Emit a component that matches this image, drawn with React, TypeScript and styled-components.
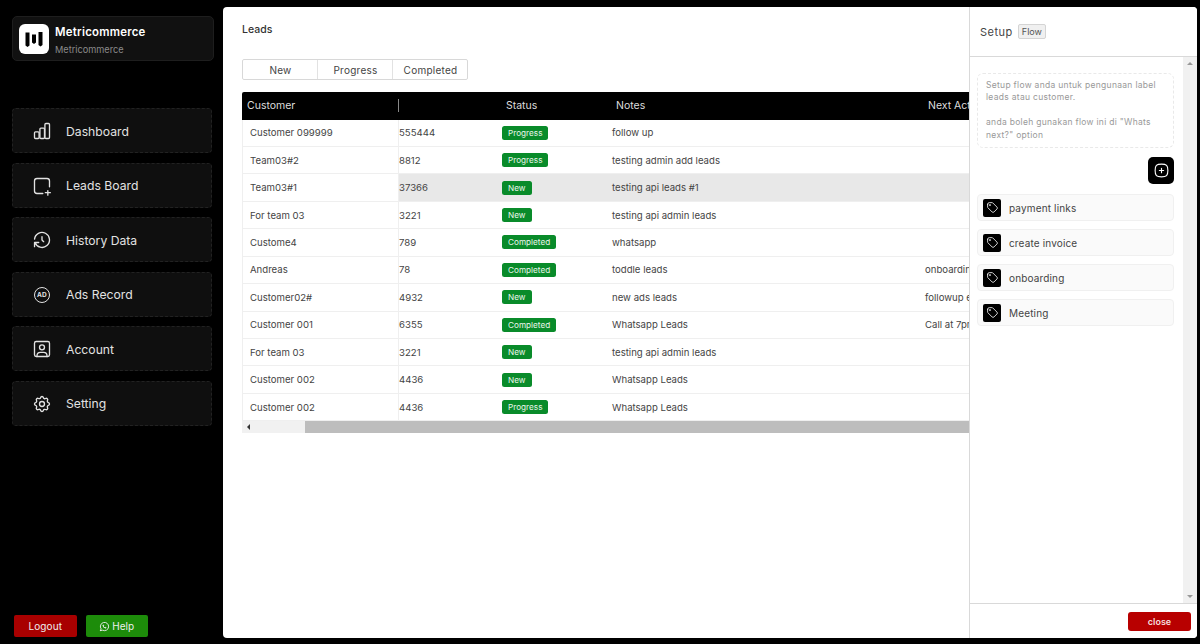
import { useState } from 'react';
import styled, { createGlobalStyle } from 'styled-components';
import {
  TbHistory,
  TbUserSquare,
  TbSettings,
  TbTag,
  TbSquareRoundedPlus,
  TbBrandWhatsapp,
} from 'react-icons/tb';

const GlobalStyle = createGlobalStyle`
  html, body {
    margin: 0;
    height: 100%;
    background: #000;
    font-family: 'Inter', 'Liberation Sans', sans-serif;
  }
  #root { height: 100%; }
  * { box-sizing: border-box; }
`;

const Page = styled.div`
  height: 644px;
  width: 1200px;
  display: flex;
  overflow: hidden;
  background: #000;
`;

const Sidebar = styled.aside`
  width: 223px;
  flex-shrink: 0;
  display: flex;
  flex-direction: column;
  padding: 16px 11px 7px 12px;
`;

const Brand = styled.div`
  height: 45px;
  display: flex;
  align-items: center;
  gap: 6px;
  padding-left: 6px;
  margin-right: -2px;
  background: #111;
  border: 1px solid #1e1e1e;
  border-radius: 5px;
`;

const LogoBox = styled.div`
  width: 30px;
  height: 30px;
  border-radius: 6px;
  background: #fff;
  display: flex;
  align-items: center;
  justify-content: center;
`;

const BrandText = styled.div`
  display: flex;
  flex-direction: column;
  gap: 5px;
  padding-top: 3px;
`;

const BrandName = styled.div`
  font-size: 11.4px;
  font-weight: 600;
  line-height: 14px;
  letter-spacing: 0.25px;
  color: #fff;
`;

const BrandSub = styled.div`
  font-size: 9.2px;
  line-height: 12px;
  color: #8a8a8a;
`;

const Menu = styled.nav`
  margin-top: 47px;
  display: flex;
  flex-direction: column;
  gap: 9.5px;
`;

const MenuItem = styled.a`
  height: 45px;
  display: flex;
  align-items: center;
  gap: 14px;
  padding: 1px 0 0 19px;
  background: #0f0f0f;
  border: 1px dashed #222;
  border-radius: 4px;
  color: #e2e2e2;
  font-size: 12.2px;
  svg {
    width: 20px;
    height: 20px;
    flex-shrink: 0;
    stroke-width: 1.6;
  }
`;

const AdsIcon = styled.span`
  width: 16px;
  height: 16px;
  margin: 0 2px;
  flex-shrink: 0;
  border: 1.3px solid #e2e2e2;
  border-radius: 50%;
  display: flex;
  align-items: center;
  justify-content: center;
  font-size: 6.5px;
  font-weight: 700;
  letter-spacing: 0.2px;
`;

const SidebarFooter = styled.div`
  margin-top: auto;
  padding-left: 2px;
  display: flex;
  gap: 9px;
`;

const FootButton = styled.button<{ $bg: string }>`
  width: 62.5px;
  height: 22px;
  padding: 0;
  border: 0;
  border-radius: 2px;
  background: ${(p) => p.$bg};
  color: #eee;
  font-family: inherit;
  font-size: 10px;
  letter-spacing: 0.1px;
  display: flex;
  align-items: center;
  justify-content: center;
  gap: 2px;
  svg {
    width: 11px;
    height: 11px;
  }
`;

const Main = styled.main`
  position: relative;
  width: 974px;
  height: 631px;
  margin-top: 7px;
  background: #fff;
  border-radius: 4px;
  overflow: hidden;
`;

const Content = styled.div`
  padding: 16px 0 0 19px;
`;

const Title = styled.h1`
  margin: 0;
  font-size: 10.5px;
  line-height: 13px;
  font-weight: 500;
  color: #333;
`;

const Tabs = styled.div`
  margin-top: 23px;
  width: 226px;
  height: 21px;
  display: flex;
  border: 1px solid #d8d8d8;
  border-radius: 2px;
`;

const Tab = styled.div`
  flex: 1;
  display: flex;
  align-items: center;
  justify-content: center;
  padding-left: 1px;
  font-size: 10px;
  letter-spacing: 0.25px;
  color: #444;
  & + & {
    border-left: 1px solid #e2e2e2;
  }
`;

const Table = styled.div`
  margin-top: 12px;
  width: 940px;
`;

const HeadRow = styled.div`
  display: flex;
  height: 27.5px;
  background: #000;
  border-radius: 2px 0 0 0;
  color: #ddd;
  font-size: 10.5px;
  align-items: center;
`;

const HeadCell = styled.div<{ $w: number; $divider?: boolean }>`
  width: ${(p) => p.$w}px;
  flex-shrink: 0;
  padding-left: 5px;
  line-height: 13px;
  white-space: nowrap;
  border-right: ${(p) => (p.$divider ? '1px solid #888' : '0')};
`;

const Row = styled.div<{ $active?: boolean }>`
  display: flex;
  align-items: center;
  height: 27.45px;
  border-bottom: 1px solid #efefef;
  background: ${(p) => (p.$active ? '#e8e8e8' : '#fff')};
  font-size: 9.6px;
  color: #444;
`;

const Cell = styled.div<{ $w: number }>`
  width: ${(p) => p.$w}px;
  flex-shrink: 0;
  white-space: nowrap;
`;

const CustomerCell = styled(Cell)`
  height: 100%;
  display: flex;
  align-items: center;
  padding-left: 7px;
  background: #fff;
  border-left: 1px solid #efefef;
  border-right: 1px solid #efefef;
`;

const Badge = styled.span`
  display: inline-block;
  height: 14px;
  line-height: 14px;
  padding: 0 6px;
  border-radius: 2.5px;
  background: #098b2a;
  color: #e9f6ec;
  font-size: 8.2px;
`;

const Scrollbar = styled.div`
  display: flex;
  align-items: center;
  height: 11.5px;
  width: 940px;
  background: #f1f1f1;
`;

const ScrollArrowLeft = styled.span`
  margin-left: 5px;
  width: 0;
  height: 0;
  border-top: 3px solid transparent;
  border-bottom: 3px solid transparent;
  border-right: 3px solid #333;
`;

const ScrollThumb = styled.div`
  margin-left: 55px;
  flex: 1;
  height: 100%;
  background: #bdbdbd;
`;

const Drawer = styled.section`
  position: absolute;
  top: 0;
  right: 0;
  bottom: 0;
  width: 228px;
  display: flex;
  flex-direction: column;
  background: #fff;
  border-left: 1px solid #d9d9d9;
`;

const DrawerHead = styled.header`
  height: 50px;
  flex-shrink: 0;
  display: flex;
  align-items: center;
  gap: 5px;
  padding-left: 10px;
  border-bottom: 1px solid #d9d9d9;
  font-size: 11px;
  letter-spacing: 0.5px;
  color: #444;
`;

const FlowTag = styled.span`
  font-size: 9px;
  letter-spacing: 0;
  line-height: 13px;
  padding: 0 3px;
  background: #f0f0f0;
  border: 1px solid #d4d4d4;
  border-radius: 2px;
  color: #555;
`;

const DrawerBody = styled.div`
  flex: 1;
  display: flex;
  min-height: 0;
`;

const DrawerInner = styled.div`
  flex: 1;
  padding: 16px 9px 0 7px;
  display: flex;
  flex-direction: column;
`;

const NoteBox = styled.div`
  height: 75px;
  padding: 5px 8px;
  border: 1px dashed #e9e9e9;
  border-radius: 6px;
  font-size: 8.5px;
  line-height: 12.4px;
  letter-spacing: 0.3px;
  color: #999;
`;

const AddButton = styled.button`
  align-self: flex-end;
  margin-top: 9px;
  width: 26px;
  height: 27px;
  padding: 0;
  border: 0;
  border-radius: 5px;
  background: #000;
  color: #fff;
  display: flex;
  align-items: center;
  justify-content: center;
  svg {
    width: 17px;
    height: 17px;
    stroke-width: 1.6;
  }
`;

const FlowList = styled.div`
  margin-top: 10px;
  display: flex;
  flex-direction: column;
  gap: 8px;
`;

const FlowItem = styled.div`
  height: 27px;
  display: flex;
  align-items: center;
  gap: 8px;
  padding-left: 5px;
  background: #fafafa;
  border: 1px solid #f0f0f0;
  border-radius: 4px;
  font-size: 10px;
  letter-spacing: 0.15px;
  color: #444;
`;

const TagIcon = styled.span`
  width: 18px;
  height: 18px;
  border-radius: 2px;
  background: #000;
  color: #eee;
  display: flex;
  align-items: center;
  justify-content: center;
  svg {
    width: 13px;
    height: 13px;
    stroke-width: 1.6;
  }
`;

const DrawerScroll = styled.div`
  width: 14px;
  flex-shrink: 0;
  background: #f1f1f1;
  display: flex;
  flex-direction: column;
  justify-content: space-between;
  align-items: center;
  padding: 5px 0;
`;

const ArrowUp = styled.span`
  width: 0;
  height: 0;
  border-left: 3px solid transparent;
  border-right: 3px solid transparent;
  border-bottom: 3px solid #999;
`;

const ArrowDown = styled(ArrowUp)`
  border-bottom: 0;
  border-top: 3px solid #999;
`;

const DrawerFoot = styled.footer`
  height: 35px;
  flex-shrink: 0;
  display: flex;
  align-items: flex-start;
  justify-content: flex-end;
  padding: 8px 6px 0 0;
  border-top: 1px solid #d9d9d9;
`;

const CloseButton = styled.button`
  width: 63px;
  height: 19px;
  padding: 0;
  border: 0;
  border-radius: 3px;
  background: #b80000;
  color: #f4dede;
  font-family: inherit;
  font-size: 9px;
  font-weight: 600;
`;

const Logo = () => (
  <svg width="18" height="16" viewBox="0 0 18 16" fill="#000">
    <path d="M0.5 1.5 H4.5 V14.5 L2.5 16 L0.5 14.5 Z" />
    <path d="M7 3.5 H11 V11.5 L9 13 L7 11.5 Z" />
    <path d="M13.5 1 H17.5 V14 L15.5 15.5 L13.5 14 Z" />
  </svg>
);

const BarsIcon = () => (
  <svg viewBox="0 0 24 24" fill="none" stroke="currentColor" strokeWidth="1.6" strokeLinejoin="round">
    <rect x="3" y="13" width="5.5" height="8" rx="1.2" />
    <rect x="9.5" y="8.5" width="5.5" height="12.5" rx="1.2" />
    <rect x="15.5" y="3" width="5.5" height="18" rx="1.2" />
  </svg>
);

const LeadsIcon = () => (
  <svg viewBox="0 0 24 24" fill="none" stroke="currentColor" strokeWidth="1.6" strokeLinecap="round" strokeLinejoin="round">
    <path d="M13 21H6a3 3 0 0 1-3-3V6a3 3 0 0 1 3-3h12a3 3 0 0 1 3 3v7" />
    <path d="M16 20h6M19 17.5v5.5" />
  </svg>
);

type Status = 'New' | 'Progress' | 'Completed';

const leads: { name: string; phone: string; status: Status; notes: string; next?: string }[] = [
  { name: 'Customer 099999', phone: '555444', status: 'Progress', notes: 'follow up' },
  { name: 'Team03#2', phone: '8812', status: 'Progress', notes: 'testing admin add leads' },
  { name: 'Team03#1', phone: '37366', status: 'New', notes: 'testing api leads #1' },
  { name: 'For team 03', phone: '3221', status: 'New', notes: 'testing api admin leads' },
  { name: 'Custome4', phone: '789', status: 'Completed', notes: 'whatsapp' },
  { name: 'Andreas', phone: '78', status: 'Completed', notes: 'toddle leads', next: 'onboarding' },
  { name: 'Customer02#', phone: '4932', status: 'New', notes: 'new ads leads', next: 'followup email' },
  { name: 'Customer 001', phone: '6355', status: 'Completed', notes: 'Whatsapp Leads', next: 'Call at 7pm' },
  { name: 'For team 03', phone: '3221', status: 'New', notes: 'testing api admin leads' },
  { name: 'Customer 002', phone: '4436', status: 'New', notes: 'Whatsapp Leads' },
  { name: 'Customer 002', phone: '4436', status: 'Progress', notes: 'Whatsapp Leads' },
];

const flows = ['payment links', 'create invoice', 'onboarding', 'Meeting'];

const App = () => {
  const [active] = useState(2);

  return (
    <Page>
      <GlobalStyle />
      <Sidebar>
        <Brand>
          <LogoBox>
            <Logo />
          </LogoBox>
          <BrandText>
            <BrandName>Metricommerce</BrandName>
            <BrandSub>Metricommerce</BrandSub>
          </BrandText>
        </Brand>
        <Menu>
          <MenuItem><BarsIcon />Dashboard</MenuItem>
          <MenuItem><LeadsIcon />Leads Board</MenuItem>
          <MenuItem><TbHistory />History Data</MenuItem>
          <MenuItem><AdsIcon>AD</AdsIcon>Ads Record</MenuItem>
          <MenuItem><TbUserSquare />Account</MenuItem>
          <MenuItem><TbSettings />Setting</MenuItem>
        </Menu>
        <SidebarFooter>
          <FootButton $bg="#a80000">Logout</FootButton>
          <FootButton $bg="#1d8c0a"><TbBrandWhatsapp />Help</FootButton>
        </SidebarFooter>
      </Sidebar>
      <Main>
        <Content>
          <Title>Leads</Title>
          <Tabs>
            <Tab>New</Tab>
            <Tab>Progress</Tab>
            <Tab>Completed</Tab>
          </Tabs>
          <Table>
            <HeadRow>
              <HeadCell $w={157} $divider>Customer</HeadCell>
              <HeadCell $w={102} />
              <HeadCell $w={110}>Status</HeadCell>
              <HeadCell $w={312}>Notes</HeadCell>
              <HeadCell $w={200}>Next Action</HeadCell>
            </HeadRow>
            {leads.map((lead, i) => (
              <Row key={i} $active={i === active}>
                <CustomerCell $w={157}>{lead.name}</CustomerCell>
                <Cell $w={103}>{lead.phone}</Cell>
                <Cell $w={110}><Badge>{lead.status}</Badge></Cell>
                <Cell $w={313}>{lead.notes}</Cell>
                <Cell $w={200}>{lead.next}</Cell>
              </Row>
            ))}
            <Scrollbar>
              <ScrollArrowLeft />
              <ScrollThumb />
            </Scrollbar>
          </Table>
        </Content>
        <Drawer>
          <DrawerHead>
            Setup <FlowTag>Flow</FlowTag>
          </DrawerHead>
          <DrawerBody>
            <DrawerInner>
              <NoteBox>
                Setup flow anda untuk pengunaan label leads atau customer.
                <br />
                <br />
                anda boleh gunakan flow ini di "Whats next?" option
              </NoteBox>
              <AddButton><TbSquareRoundedPlus /></AddButton>
              <FlowList>
                {flows.map((flow) => (
                  <FlowItem key={flow}>
                    <TagIcon><TbTag /></TagIcon>
                    {flow}
                  </FlowItem>
                ))}
              </FlowList>
            </DrawerInner>
            <DrawerScroll>
              <ArrowUp />
              <ArrowDown />
            </DrawerScroll>
          </DrawerBody>
          <DrawerFoot>
            <CloseButton>close</CloseButton>
          </DrawerFoot>
        </Drawer>
      </Main>
    </Page>
  );
};

export default App;
